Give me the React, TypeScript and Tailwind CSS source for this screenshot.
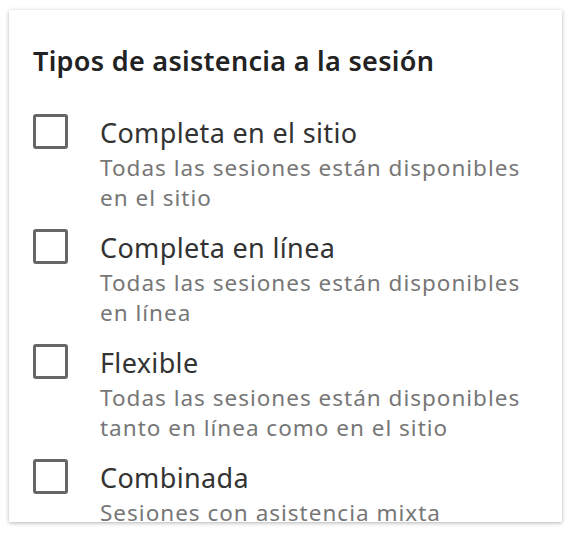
import React from 'react';

const options = [
  { label: 'Completa en el sitio', desc: 'Todas las sesiones están disponibles en el sitio' },
  { label: 'Completa en línea', desc: 'Todas las sesiones están disponibles en línea' },
  { label: 'Flexible', desc: 'Todas las sesiones están disponibles tanto en línea como en el sitio' },
  { label: 'Combinada', desc: 'Sesiones con asistencia mixta' },
];

export default function App() {
  return (
    <div className="w-[572px] h-[534px] bg-white pt-[10px] pl-[9px]" style={{ fontFamily: '"Noto Sans", "Open Sans", sans-serif' }}>
      <div className="w-[553px] h-[512px] bg-white overflow-hidden shadow-[0_1px_4px_rgba(0,0,0,0.3)] px-[24px] pt-[31px]">
        <h2 className="text-[27px] font-semibold tracking-[0.3px] text-[#222] leading-[40px] mb-[32px]">Tipos de asistencia a la sesión</h2>
        <div className="flex flex-col gap-[15px]">
          {options.map((o) => (
            <label key={o.label} className="flex items-start gap-[32px]">
              <span className="mt-[1px] w-[35px] h-[35px] shrink-0 border-[3px] border-[#666] rounded-[3px]" />
              <span className="flex flex-col w-[445px]">
                <span className="text-[27px] tracking-[0.35px] leading-[40px] text-[#333]">{o.label}</span>
                <span className="text-[22.5px] tracking-[1px] leading-[30px] text-[#777]">{o.desc}</span>
              </span>
            </label>
          ))}
        </div>
      </div>
    </div>
  );
}
